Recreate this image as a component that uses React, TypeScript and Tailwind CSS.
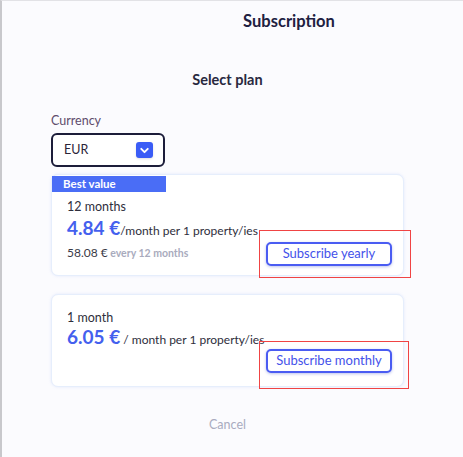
import { ChevronDown } from "lucide-react";

const font = { fontFamily: "Lato, 'Open Sans', sans-serif" };

const App = () => {
  return (
    <div
      className="w-[463px] h-[457px] bg-[#fbfbfe] border-l-2 border-t border-l-[#c8c8cc] border-t-[#e2e2e6] text-[#2a2a3e] overflow-hidden"
      style={font}
    >
      <div className="pt-[9px] pl-[113px] flex justify-center">
        <h2 className="text-[16.5px] leading-[22px] font-bold text-[#202040]">Subscription</h2>
      </div>

      <div className="ml-[49px] w-[353px] flex flex-col">
        <h3 className="mt-[38px] text-center text-[14.5px] leading-[20px] font-bold text-[#28283e]">Select plan</h3>

        <label className="mt-[23px] text-[12.5px] leading-[16px] text-[#5e4c6c]">Currency</label>
        <div className="mt-[4px] w-[114px] h-[34px] rounded-[6px] border-2 border-[#1c1d3a] bg-white flex items-center justify-between pl-[11px] pr-[10px]">
          <span className="text-[12.5px] text-[#2a2438]">EUR</span>
          <span className="w-[17px] h-[16px] rounded-[3px] bg-[#3a5cf6] flex items-center justify-center shadow-sm">
            <ChevronDown className="w-[13px] h-[13px] text-white" strokeWidth={3.5} />
          </span>
        </div>

        <div className="relative mt-[7px] h-[102px] rounded-[7px] border border-[#e6eefc] bg-white shadow-[0_0_3px_rgba(180,200,250,0.35)]">
          <div className="mt-[1px] w-[114px] h-[16px] bg-[#4a6df6] text-white text-[11.5px] leading-[16px] font-bold pl-[11px]">
            Best value
          </div>
          <div className="flex justify-between pl-[15px] pr-[11px] pt-[7px]">
            <div className="flex flex-col">
              <span className="text-[12.5px] leading-[16px] text-[#2e2e3c]">12 months</span>
              <span className="mt-[2px] leading-[22px] whitespace-nowrap">
                <span className="text-[19px] font-bold text-[#4460ee]">4.84 €</span>
                <span className="text-[12px] text-[#2e2e3c]">/month per 1 property/ies</span>
              </span>
              <span className="mt-[1px] leading-[16px] whitespace-nowrap">
                <span className="text-[12px] text-[#3a3a48]">58.08 €</span>
                <span className="text-[10.5px] font-bold text-[#a9abbd]"> every 12 months</span>
              </span>
            </div>
            <button className="mt-[43px] w-[126px] h-[24px] rounded-[5px] border-2 border-[#4a5cf2] bg-white text-[13px] text-[#4452ea] shadow-[0_1px_3px_rgba(60,80,200,0.35)]">
              Subscribe yearly
            </button>
          </div>
          <div className="absolute left-[207px] top-[55px] w-[152px] h-[48px] border border-[#f04444] pointer-events-none" />
        </div>

        <div className="relative mt-[18px] h-[93px] rounded-[7px] border border-[#e6eefc] bg-white shadow-[0_0_3px_rgba(180,200,250,0.35)]">
          <div className="flex justify-between pl-[15px] pr-[11px] pt-[15px]">
            <div className="flex flex-col">
              <span className="text-[12.5px] leading-[16px] text-[#2e2e3c]">1 month</span>
              <span className="leading-[22px] whitespace-nowrap">
                <span className="text-[19px] font-bold text-[#4460ee]">6.05 €</span>
                <span className="text-[12px] text-[#2e2e3c]"> / month per 1 property/ies</span>
              </span>
            </div>
            <button className="mt-[39px] w-[126px] h-[24px] rounded-[5px] border-2 border-[#4a5cf2] bg-white text-[13px] text-[#4452ea] shadow-[0_1px_3px_rgba(60,80,200,0.35)]">
              Subscribe monthly
            </button>
          </div>
          <div className="absolute left-[207px] top-[46px] w-[150px] h-[48px] border border-[#f04444] pointer-events-none" />
        </div>

        <button className="mt-[29px] self-center text-[12.5px] text-[#a9abc0]">Cancel</button>
      </div>
    </div>
  );
};

export default App;
